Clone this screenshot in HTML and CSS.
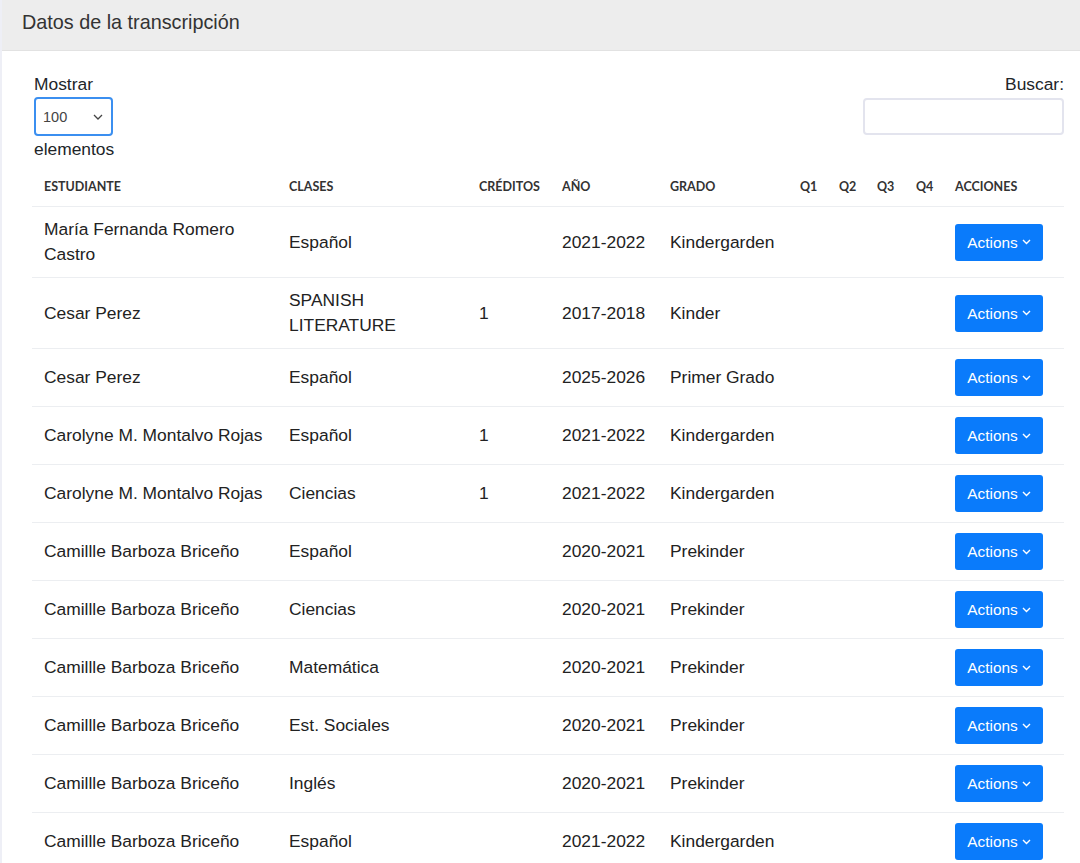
FILE: index.html
```html
<!DOCTYPE html>
<html lang="es">
<head>
<meta charset="utf-8">
<title>Datos de la transcripción</title>
<link rel="stylesheet" href="styles.css">
</head>
<body>
<div class="card">
  <div class="card-header">Datos de la transcripción</div>
  <div class="card-body">
    <div class="controls">
      <div class="length">
        <div class="lbl">Mostrar</div>
        <div class="select"><span>100</span><svg width="10" height="6" viewBox="0 0 10 6"><path d="M1 1l4 4 4-4" fill="none" stroke="#444" stroke-width="1.3"/></svg></div>
        <div class="lbl">elementos</div>
      </div>
      <div class="search">
        <div class="lbl">Buscar:</div>
        <div class="input"></div>
      </div>
    </div>
    <table>
      <colgroup>
        <col style="width:245px"><col style="width:190px"><col style="width:83px"><col style="width:108px"><col style="width:130px"><col style="width:39px"><col style="width:38px"><col style="width:39px"><col style="width:39px"><col style="width:121px">
      </colgroup>
      <thead>
        <tr><th>Estudiante</th><th>Clases</th><th>Créditos</th><th>Año</th><th>Grado</th><th>Q1</th><th>Q2</th><th>Q3</th><th>Q4</th><th>Acciones</th></tr>
      </thead>
      <tbody>
        <tr><td>María Fernanda Romero Castro</td><td>Español</td><td></td><td>2021-2022</td><td>Kindergarden</td><td></td><td></td><td></td><td></td><td><span class="btn">Actions<svg width="9" height="6" viewBox="0 0 9 6"><path d="M1 1l3.5 3.5L8 1" fill="none" stroke="#fff" stroke-width="1.4"/></svg></span></td></tr>
        <tr><td>Cesar Perez</td><td>SPANISH LITERATURE</td><td>1</td><td>2017-2018</td><td>Kinder</td><td></td><td></td><td></td><td></td><td><span class="btn">Actions<svg width="9" height="6" viewBox="0 0 9 6"><path d="M1 1l3.5 3.5L8 1" fill="none" stroke="#fff" stroke-width="1.4"/></svg></span></td></tr>
        <tr><td>Cesar Perez</td><td>Español</td><td></td><td>2025-2026</td><td>Primer Grado</td><td></td><td></td><td></td><td></td><td><span class="btn">Actions<svg width="9" height="6" viewBox="0 0 9 6"><path d="M1 1l3.5 3.5L8 1" fill="none" stroke="#fff" stroke-width="1.4"/></svg></span></td></tr>
        <tr><td>Carolyne M. Montalvo Rojas</td><td>Español</td><td>1</td><td>2021-2022</td><td>Kindergarden</td><td></td><td></td><td></td><td></td><td><span class="btn">Actions<svg width="9" height="6" viewBox="0 0 9 6"><path d="M1 1l3.5 3.5L8 1" fill="none" stroke="#fff" stroke-width="1.4"/></svg></span></td></tr>
        <tr><td>Carolyne M. Montalvo Rojas</td><td>Ciencias</td><td>1</td><td>2021-2022</td><td>Kindergarden</td><td></td><td></td><td></td><td></td><td><span class="btn">Actions<svg width="9" height="6" viewBox="0 0 9 6"><path d="M1 1l3.5 3.5L8 1" fill="none" stroke="#fff" stroke-width="1.4"/></svg></span></td></tr>
        <tr><td>Camillle Barboza Briceño</td><td>Español</td><td></td><td>2020-2021</td><td>Prekinder</td><td></td><td></td><td></td><td></td><td><span class="btn">Actions<svg width="9" height="6" viewBox="0 0 9 6"><path d="M1 1l3.5 3.5L8 1" fill="none" stroke="#fff" stroke-width="1.4"/></svg></span></td></tr>
        <tr><td>Camillle Barboza Briceño</td><td>Ciencias</td><td></td><td>2020-2021</td><td>Prekinder</td><td></td><td></td><td></td><td></td><td><span class="btn">Actions<svg width="9" height="6" viewBox="0 0 9 6"><path d="M1 1l3.5 3.5L8 1" fill="none" stroke="#fff" stroke-width="1.4"/></svg></span></td></tr>
        <tr><td>Camillle Barboza Briceño</td><td>Matemática</td><td></td><td>2020-2021</td><td>Prekinder</td><td></td><td></td><td></td><td></td><td><span class="btn">Actions<svg width="9" height="6" viewBox="0 0 9 6"><path d="M1 1l3.5 3.5L8 1" fill="none" stroke="#fff" stroke-width="1.4"/></svg></span></td></tr>
        <tr><td>Camillle Barboza Briceño</td><td>Est. Sociales</td><td></td><td>2020-2021</td><td>Prekinder</td><td></td><td></td><td></td><td></td><td><span class="btn">Actions<svg width="9" height="6" viewBox="0 0 9 6"><path d="M1 1l3.5 3.5L8 1" fill="none" stroke="#fff" stroke-width="1.4"/></svg></span></td></tr>
        <tr><td>Camillle Barboza Briceño</td><td>Inglés</td><td></td><td>2020-2021</td><td>Prekinder</td><td></td><td></td><td></td><td></td><td><span class="btn">Actions<svg width="9" height="6" viewBox="0 0 9 6"><path d="M1 1l3.5 3.5L8 1" fill="none" stroke="#fff" stroke-width="1.4"/></svg></span></td></tr>
        <tr><td>Camillle Barboza Briceño</td><td>Español</td><td></td><td>2021-2022</td><td>Kindergarden</td><td></td><td></td><td></td><td></td><td><span class="btn">Actions<svg width="9" height="6" viewBox="0 0 9 6"><path d="M1 1l3.5 3.5L8 1" fill="none" stroke="#fff" stroke-width="1.4"/></svg></span></td></tr>
      </tbody>
    </table>
  </div>
</div>
</body>
</html>
```

FILE: styles.css
```css
html, body {
  margin: 0;
  padding: 0;
  background: #eeeff6;
  font-family: "Liberation Sans", Arial, sans-serif;
  color: #212529;
  overflow: hidden;
}
.card {
  margin-left: 2px;
  width: 1078px;
  background: #fff;
  min-height: 863px;
}
.card-header {
  height: 51px;
  box-sizing: border-box;
  background: #ededed;
  border-bottom: 1px solid #e2e2e2;
  padding: 10px 0 0 20px;
  font-size: 19.8px;
  color: #333;
  line-height: 25px;
}
.card-body {
  padding: 21px 16px 0 30px;
}
.controls {
  display: flex;
  justify-content: space-between;
  font-size: 17.4px;
  line-height: 24px;
}
.length {
  padding-left: 2px;
}
.select {
  width: 79px;
  height: 39px;
  box-sizing: border-box;
  border: 2px solid #3b8ff0;
  border-radius: 4px;
  display: flex;
  align-items: center;
  justify-content: space-between;
  padding: 0 8px 0 7px;
  font-size: 14.5px;
  color: #444;
  margin: 1px 0 1px;
}
.search {
  text-align: right;
}
.input {
  width: 201px;
  height: 37px;
  box-sizing: border-box;
  border: 2px solid #e3e4ee;
  border-radius: 4px;
  margin-top: 2px;
}
table {
  border-collapse: collapse;
  table-layout: fixed;
  width: 1032px;
  margin-top: 7px;
}
th {
  font-family: Lato, "Liberation Sans", sans-serif;
  font-weight: bold;
  font-size: 12.5px;
  text-transform: uppercase;
  text-align: left;
  color: #333;
  padding: 11px 12px 11px;
  line-height: 16px;
  border-bottom: 1px solid #eceef1;
}
td {
  font-size: 17.4px;
  line-height: 25px;
  padding: 10px 12px;
  vertical-align: middle;
  border-bottom: 1px solid #eceef1;
  color: #222;
}
.btn {
  display: inline-flex;
  align-items: center;
  gap: 4px;
  height: 37px;
  width: 88px;
  box-sizing: border-box;
  justify-content: center;
  background: #0a7bfb;
  color: #fff;
  font-size: 15.4px;
  border-radius: 3px;
  vertical-align: middle;
}
```
